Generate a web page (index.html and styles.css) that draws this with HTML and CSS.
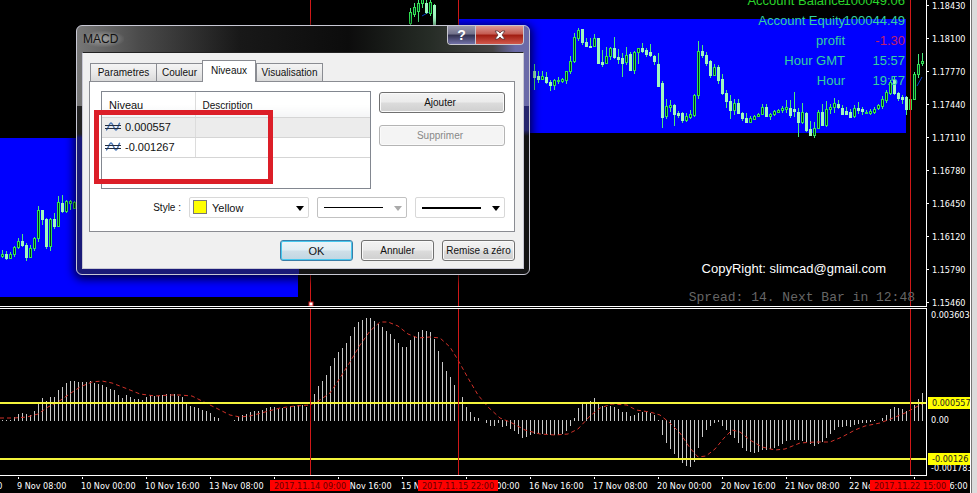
FILE: index.html
```html
<!DOCTYPE html>
<html lang="fr">

<head>
  <meta charset="UTF-8">
  <meta name="viewport" content="width=device-width, initial-scale=1.0">
  <title>MACD</title>
  <link rel="stylesheet" href="styles.css">
</head>

<body>
  <main class="terminal">
    <section class="plot price">
      <svg id="price_chart" class="chart"></svg>
      <dl class="account">
        <dt class="on-black">Account Balance</dt>
        <dd class="on-black">100049.06</dd>
        <dt>Account Equity</dt>
        <dd>100044.49</dd>
        <dt>profit</dt>
        <dd class="loss">-1.30</dd>
        <dt>Hour GMT</dt>
        <dd>15:57</dd>
        <dt>Hour</dt>
        <dd>19:57</dd>
      </dl>
      <p class="copyright">CopyRight: slimcad@gmail.com</p>
      <p class="spread">Spread: 14. Next Bar in 12:48</p>
    </section>
    <ul class="scale price-scale">
      <li>1.18430</li>
      <li>1.18100</li>
      <li>1.17770</li>
      <li>1.17440</li>
      <li>1.17110</li>
      <li>1.16780</li>
      <li>1.16450</li>
      <li>1.16120</li>
      <li>1.15790</li>
      <li>1.15460</li>
    </ul>

    <section class="plot macd">
      <svg id="macd_chart" class="chart"></svg>
    </section>
    <div class="scale macd-scale">
      <span>0.003603</span>
      <span>0.00</span>
      <span>-0.001783</span>
      <b class="level level-up">0.000557</b>
      <b class="level level-down">-0.00126</b>
    </div>

    <div class="times">
      <ol>
        <li>8 Nov 16:00</li>
        <li>9 Nov 08:00</li>
        <li>10 Nov 00:00</li>
        <li>10 Nov 16:00</li>
        <li>13 Nov 08:00</li>
        <li>14 Nov 00:00</li>
        <li>14 Nov 16:00</li>
        <li>15 Nov 08:00</li>
        <li>16 Nov 00:00</li>
        <li>16 Nov 16:00</li>
        <li>17 Nov 08:00</li>
        <li>20 Nov 00:00</li>
        <li>20 Nov 16:00</li>
        <li>21 Nov 08:00</li>
        <li>22 Nov 00:00</li>
        <li>22 Nov 16:00</li>
      </ol>
      <b class="stamp stamp-1">2017.11.14 09:00</b>
      <b class="stamp stamp-2">2017.11.15 22:00</b>
      <b class="stamp stamp-3">2017.11.22 15:00</b>
    </div>
  </main>
  <div class="edge"></div>

  <div class="dialog" role="dialog" aria-labelledby="dialog_title">
    <header class="titlebar">
      <h1 id="dialog_title">MACD</h1>
      <div class="win-btns">
        <button class="help" aria-label="Aide">?</button>
        <button class="close" aria-label="Fermer">
          <svg width="12" height="10" viewBox="0 0 12 10">
            <path d="M1 1h3l2 2 2-2h3L8 5l3 4H8L6 7 4 9H1l3-4z" fill="#fff" stroke="#5a3434" stroke-width=".8" />
          </svg>
        </button>
      </div>
    </header>
    <div class="client">
      <div class="tabs" role="tablist">
        <button role="tab" class="tab-1">Parametres</button>
        <button role="tab" class="tab-2">Couleur</button>
        <button role="tab" class="tab-3 active" aria-selected="true">Niveaux</button>
        <button role="tab" class="tab-4">Visualisation</button>
      </div>
      <div class="tab-page">
        <div class="levels">
          <div class="list">
            <table>
              <thead>
                <tr>
                  <th>Niveau</th>
                  <th>Description</th>
                </tr>
              </thead>
              <tbody>
                <tr class="selected">
                  <td>
                    <svg class="wave" width="16" height="12" viewBox="0 0 16 12">
                      <path d="M1 9C3 9 4 2 6 2s3 7 5 7 2-6 4-7" fill="none" stroke="#4a78b8" stroke-width="1.4" />
                      <path d="M0 4.5h16M0 7.5h16" stroke="#222c40" />
                    </svg>0.000557
                  </td>
                  <td></td>
                </tr>
                <tr>
                  <td>
                    <svg class="wave" width="16" height="12" viewBox="0 0 16 12">
                      <path d="M1 9C3 9 4 2 6 2s3 7 5 7 2-6 4-7" fill="none" stroke="#4a78b8" stroke-width="1.4" />
                      <path d="M0 4.5h16M0 7.5h16" stroke="#222c40" />
                    </svg>-0.001267
                  </td>
                  <td></td>
                </tr>
              </tbody>
            </table>
            <div class="marker"></div>
          </div>
          <div class="actions">
            <button class="btn">Ajouter</button>
            <button class="btn" disabled>Supprimer</button>
          </div>
        </div>
        <div class="style-row">
          <label for="color">Style :</label>
          <div class="combo combo-color">
            <select id="color">
              <option>Yellow</option>
            </select>
            <i class="swatch"></i>
            <svg class="arrow" width="8" height="5"><path d="M0 0h8L4 5z" /></svg>
          </div>
          <div class="combo combo-off">
            <select aria-label="Type de ligne" disabled>
              <option value="solid"></option>
            </select>
            <i class="line"></i>
            <svg class="arrow" width="8" height="5"><path d="M0 0h8L4 5z" /></svg>
          </div>
          <div class="combo">
            <select aria-label="Epaisseur">
              <option value="2"></option>
            </select>
            <i class="line thick"></i>
            <svg class="arrow" width="8" height="5"><path d="M0 0h8L4 5z" /></svg>
          </div>
        </div>
      </div>
      <footer class="footer">
        <button class="btn default">OK</button>
        <button class="btn">Annuler</button>
        <button class="btn">Remise a zéro</button>
      </footer>
    </div>
  </div>

  <script src="chart.js"></script>
</body>

</html>
```
FILE: styles.css
```css
* {
  margin: 0;
  padding: 0;
  box-sizing: border-box;
}

body {
  display: flex;
  min-height: 100vh;
  overflow: hidden;
  background: #000;
  color: #fff;
  font-family: "Liberation Sans", Arial, sans-serif;
  font-size: 11px;
}

ul,
ol {
  list-style: none;
}

.terminal {
  flex: 1;
  min-width: 0;
  display: grid;
  grid-template-columns: 1fr 44px;
  grid-template-rows: 307px 168px auto;
  row-gap: 1px;
  align-content: start;
  overflow: hidden;
}

.edge {
  width: 7px;
  background: #dcdcdc;
  border-left: 1px solid #fff;
  box-shadow: inset 1px 0 #777;
}

.plot {
  position: relative;
  overflow: hidden;
  border-bottom: 1px solid #fff;
}

.macd {
  border-top: 1px solid #fff;
}

.chart {
  display: block;
  width: 100%;
  height: 100%;
}

/* scales */
.scale,
.times {
  font-family: "DejaVu Sans Condensed", Tahoma, sans-serif;
  font-size: 9px;
  line-height: 14px;
}

.scale {
  position: relative;
  overflow: hidden;
  border-left: 1px solid #fff;
}

.price-scale li {
  display: flex;
  align-items: center;
  gap: 3px;
  height: 33px;
}

.price-scale li:first-child {
  margin-top: -11px;
}

.price-scale li::before {
  content: "";
  width: 2px;
  height: 1px;
  background: #fff;
}

.macd-scale {
  display: grid;
  grid-template-rows: 105px 48px auto;
  align-content: start;
  padding-left: 4px;
}

.level {
  position: absolute;
  left: 1px;
  width: 42px;
  height: 12px;
  padding-left: 4px;
  overflow: hidden;
  background: #ff0;
  color: #222;
  font-weight: normal;
  line-height: 12px;
}

.level-up {
  top: 89px;
}

.level-down {
  top: 145px;
}

.times {
  grid-column: 1 / -1;
  position: relative;
  overflow: hidden;
}

.times ol {
  display: flex;
  margin-left: -47px;
}

.times li {
  flex: 0 0 64px;
  white-space: nowrap;
}

.times li::before {
  content: "";
  display: block;
  width: 1px;
  height: 2px;
  margin-left: 1px;
  background: #fff;
}

.stamp {
  position: absolute;
  top: 3px;
  width: 80px;
  height: 11px;
  background: #f00;
  color: #600;
  font-weight: normal;
  line-height: 12px;
  text-align: center;
  white-space: nowrap;
}

.stamp-1 {
  left: 270px;
}

.stamp-2 {
  left: 418px;
}

.stamp-3 {
  left: 870px;
}

/* texts over the price chart */
.account {
  position: absolute;
  top: -9px;
  right: 21px;
  display: grid;
  grid-template-columns: auto 60px;
  font-size: 13px;
  line-height: 20px;
  text-align: right;
  color: #35d0a0;
}

.account dd {
  display: flex;
  justify-content: flex-end;
}

.account .on-black {
  color: #2ad42a;
}

.account .loss {
  color: #c0206c;
}

.copyright,
.spread {
  position: absolute;
  font-size: 13px;
  line-height: 16px;
}

.copyright {
  top: 261px;
  right: 40px;
}

.spread {
  top: 290px;
  right: 11px;
  color: #666;
  font-family: "Liberation Mono", "Courier New", monospace;
}

/* dialog */
.dialog {
  position: absolute;
  left: 76px;
  top: 25px;
  width: 454px;
  padding: 0 5px 5px;
  border: 1px solid #c8c8d4;
  border-radius: 6px;
  background:
    linear-gradient(90deg, transparent 92%, #6a6aa8 97%) 0 0 / 100% 80px no-repeat,
    linear-gradient(90deg, #777 0, #4a4a4a 14%, #181818 36%, #0c0c0c 60%, #262c26 78%, #444 92%) 0 0 / 100% 80px no-repeat,
    linear-gradient(#222 0 108px, #1a1a78 112px) 0 0 / 222px 100% no-repeat,
    linear-gradient(#26266e 0 104px, #141414 110px);
  box-shadow: 0 2px 10px 2px rgba(0, 0, 0, .75);
  color: #111;
}

.titlebar {
  display: flex;
  justify-content: space-between;
  height: 26px;
}

.titlebar h1 {
  padding: 0 6px 0 1px;
  align-self: center;
  font-size: 12px;
  font-weight: normal;
  line-height: 16px;
  background: radial-gradient(#a0a0a0, transparent 75%);
}

.win-btns {
  display: flex;
  height: 19px;
  border: 1px solid #c8c8d0;
  border-top: 0;
  border-radius: 0 0 4px 4px;
  overflow: hidden;
}

.win-btns button {
  display: flex;
  justify-content: center;
  align-items: center;
  border: 0;
  color: #fff;
  font: bold 14px "Liberation Sans", Arial, sans-serif;
}

.win-btns .help {
  width: 27px;
  background: linear-gradient(#9a9aae, #70708a 45%, #30304e 50%, #7272a8);
}

.win-btns .close {
  width: 48px;
  border-left: 1px solid #c8c8d0;
  background: linear-gradient(#dc9a94, #c45a50 45%, #a01c10 50%, #d0584c);
}

.client {
  padding: 7px 8px 7px 6px;
  border: 1px solid #c8c8d4;
  border-top-color: #222;
  background: #f0f0f0;
}

.tabs {
  display: flex;
  align-items: flex-end;
  height: 21px;
  padding-left: 1px;
}

.tabs button {
  height: 18px;
  border: 1px solid #8a8c92;
  border-bottom: 0;
  border-right: 0;
  background: linear-gradient(#f4f4f4, #eaeaea 50%, #dadada);
  color: #111;
  font: 10px "Liberation Sans", Arial, sans-serif;
}

.tabs .tab-1 {
  width: 66px;
}

.tabs .tab-2 {
  width: 46px;
}

.tabs .tab-3 {
  width: 54px;
}

.tabs .tab-4 {
  width: 67px;
  border-right: 1px solid #8a8c92;
}

.tabs button.active {
  position: relative;
  height: 22px;
  margin-bottom: -1px;
  padding-bottom: 3px;
  border-right: 1px solid #8a8c92;
  background: #fff;
}

.tab-page {
  padding: 9px 9px 13px 11px;
  border: 1px solid #8a8c92;
  background: #fff;
}

.levels {
  display: flex;
  gap: 8px;
}

.list {
  position: relative;
  flex: 1;
  height: 98px;
  border: 1px solid #828790;
}

.list table {
  width: 100%;
  border-collapse: collapse;
  table-layout: fixed;
}

.list th {
  height: 25px;
  padding: 2px 7px 0;
  border-bottom: 1px solid #d5d5d5;
  background: linear-gradient(#fff 50%, #f4f5f6);
  font-weight: normal;
  text-align: left;
}

.list th:first-child,
.list td:first-child {
  width: 93px;
  border-right: 1px solid #dcdcdc;
}

.list th + th {
  font-size: 10px;
}

.list td {
  height: 20px;
  padding-left: 3px;
  border-bottom: 1px solid #d5d5d5;
  white-space: nowrap;
}

.list .selected {
  background: #ececec;
}

.wave {
  margin-right: 4px;
  vertical-align: -2px;
}

/* hand drawn frame around the two levels */
.marker {
  position: absolute;
  left: -8px;
  top: 18px;
  width: 179px;
  height: 74px;
  border: 5px solid #dc1e28;
}

.actions {
  flex: 0 0 126px;
  display: flex;
  flex-direction: column;
  gap: 12px;
  padding-top: 1px;
}

.btn {
  height: 21px;
  border: 1px solid #707070;
  border-radius: 3px;
  background: linear-gradient(#f3f3f3, #ebebeb 48%, #dcdcdc 52%, #cfcfcf);
  box-shadow: inset 0 0 0 1px #fafafa;
  color: #111;
  font: 10px "Liberation Sans", Arial, sans-serif;
  white-space: nowrap;
}

.actions .btn {
  padding-right: 4px;
}

.btn:disabled {
  border-color: #b4b4b4;
  background: #f4f4f4;
  color: #888;
}

.style-row {
  display: flex;
  align-items: center;
  justify-content: flex-end;
  gap: 8px;
  margin-top: 8px;
  font-size: 10px;
}

.combo {
  position: relative;
  width: 90px;
  height: 21px;
}

.combo-color {
  width: 120px;
}

.combo select {
  width: 100%;
  height: 100%;
  appearance: none;
  border: 1px solid #d8d8d8;
  border-radius: 2px;
  background: #fff;
  color: #111;
  font: 11px "Liberation Sans", Arial, sans-serif;
}

.combo-color select {
  padding-left: 22px;
}

.combo-off select {
  border-color: #a8a8a8;
}

.swatch {
  position: absolute;
  left: 4px;
  top: 3px;
  width: 14px;
  height: 14px;
  border: 1px solid #777;
  background: #ff0;
}

.line {
  position: absolute;
  left: 7px;
  top: 10px;
  width: 59px;
  height: 1px;
  background: #000;
}

.thick {
  height: 2px;
}

.arrow {
  position: absolute;
  right: 5px;
  top: 9px;
}

.combo-off .arrow {
  fill: #aaa;
}

.footer {
  display: flex;
  justify-content: flex-end;
  gap: 8px;
  margin-top: 8px;
}

.footer .btn {
  width: 73px;
}

.footer .default {
  border-color: #3a7ea8;
  background: linear-gradient(#eef5f8, #e0eef4 48%, #cfdfe8 52%, #c0d6e2);
  box-shadow: inset 0 0 0 1px #48c8ee;
  font-size: 11px;
}
```
FILE: chart.js
```js
const STEP = 4;
const ZERO = 112;

// high, body top, body bottom, low, 1 = up
const leftCandles = [
  [250, 254, 256, 258, 1], [251, 254, 258, 260, 0], [252, 254, 258, 259, 1], [246, 247, 254, 257, 1],
  [238, 241, 247, 249, 1], [234, 241, 245, 247, 0], [243, 245, 257, 261, 0], [245, 248, 257, 258, 1],
  [237, 238, 248, 251, 1], [206, 210, 238, 242, 1], [210, 210, 219, 225, 0], [218, 219, 246, 249, 0],
  [218, 219, 246, 251, 1], [213, 219, 226, 229, 0], [196, 202, 226, 226, 1], [195, 203, 211, 213, 0],
  [200, 201, 211, 213, 1], [200, 201, 203, 210, 1], [201, 202, 208, 209, 1],
];

const topCandles = [
  [8, 12, 23, 26, 1], [3, 7, 14, 17, 1], [0, 3, 11, 22, 1], [-3, -1, 3, 8, 1],
  [0, 3, 12, 14, 0], [-2, 2, 13, 16, 1], [4, 5, 30, 32, 0],
];

const rightCandles = [
  [64, 71, 77, 90, 0], [71, 76, 79, 83, 0], [71, 76, 79, 80, 1], [72, 77, 82, 84, 0],
  [80, 82, 85, 91, 0], [79, 80, 85, 90, 1], [77, 80, 81, 84, 1], [78, 79, 81, 83, 1],
  [71, 71, 80, 84, 1], [56, 61, 71, 74, 1], [33, 37, 61, 63, 1], [28, 30, 38, 41, 1],
  [29, 29, 42, 45, 0], [38, 42, 46, 47, 0], [38, 46, 47, 48, 0], [34, 38, 46, 47, 1],
  [38, 38, 63, 64, 0], [50, 62, 64, 67, 0], [47, 56, 63, 64, 1], [47, 48, 56, 60, 1],
  [37, 48, 57, 59, 0], [49, 57, 59, 64, 0], [53, 58, 63, 77, 0], [47, 55, 62, 65, 1],
  [52, 54, 70, 71, 0], [51, 52, 70, 74, 1], [48, 48, 52, 64, 1], [43, 48, 51, 53, 0],
  [48, 50, 54, 57, 0], [44, 52, 55, 57, 0], [55, 56, 61, 65, 0], [53, 64, 86, 87, 0],
  [81, 83, 117, 128, 0], [99, 106, 116, 119, 1], [100, 105, 107, 112, 1], [104, 105, 114, 126, 0],
  [111, 113, 115, 118, 0], [112, 113, 120, 123, 0], [113, 116, 120, 122, 1], [110, 114, 117, 119, 1],
  [94, 95, 115, 117, 1], [41, 51, 95, 99, 1], [45, 51, 55, 58, 0], [52, 55, 63, 66, 0],
  [60, 61, 75, 78, 0], [64, 67, 75, 76, 1], [65, 67, 80, 84, 0], [74, 79, 93, 95, 0],
  [90, 93, 101, 108, 0], [95, 101, 110, 119, 0], [99, 103, 110, 115, 1], [99, 103, 113, 114, 0],
  [112, 113, 118, 121, 0], [113, 118, 122, 123, 0], [116, 118, 122, 123, 1], [115, 116, 119, 120, 1],
  [113, 114, 116, 117, 1], [104, 107, 114, 115, 1], [104, 107, 116, 117, 0], [113, 114, 116, 120, 1],
  [110, 111, 114, 116, 1], [109, 110, 112, 113, 1], [106, 108, 110, 113, 1], [100, 107, 109, 113, 1],
  [100, 108, 115, 118, 0], [92, 109, 111, 117, 0], [108, 112, 122, 137, 0], [103, 112, 122, 124, 1],
  [112, 113, 130, 132, 0], [121, 129, 135, 135, 0], [122, 128, 135, 138, 1], [110, 112, 128, 129, 1],
  [104, 112, 125, 126, 0], [101, 109, 125, 127, 1], [104, 107, 109, 114, 1], [98, 103, 107, 113, 1],
  [100, 104, 107, 109, 0], [105, 108, 114, 115, 0], [107, 111, 114, 115, 0], [109, 112, 117, 118, 0],
  [105, 108, 116, 118, 1], [102, 108, 110, 114, 0], [107, 109, 111, 115, 0], [110, 112, 113, 114, 1],
  [109, 111, 113, 115, 1], [107, 109, 112, 114, 1], [104, 105, 108, 110, 1], [96, 99, 106, 109, 1],
  [90, 92, 100, 103, 1], [80, 82, 93, 95, 1], [77, 80, 93, 95, 0], [92, 93, 98, 101, 0],
  [95, 97, 99, 104, 0], [96, 97, 109, 115, 0], [96, 99, 109, 111, 1], [72, 74, 99, 100, 1],
  [54, 64, 74, 78, 1], [53, 61, 63, 66, 1],
];

const histogram = [
  1, 1, 1, 4, 7, 8, 7, 6, 10, 17, 23, 20, 24, 24, 31, 34, 38, 40, 40, 39, 39, 39, 40, 38, 37, 36,
  34, 32, 31, 26, 23, 26, 24, 22, 22, 21, 24, 26, 25, 25, 26, 27, 27, 27, 25, 24, 18, 15, 14, 13, 11, 10,
  8, 4, 3, 0, 0, 0, 1, 4, 6, 7, 9, 10, 10, 11, 13, 14, 14, 12, 13, 13, 15, 15, 16, 16, 14,
  20, 27, 35, 40, 46, 55, 63, 69, 73, 78, 85, 94, 99, 101, 103, 103, 100, 97, 94, 90, 87, 82, 78, 74, 74,
  81, 85, 89, 91, 90, 89, 82, 70, 59, 50, 44, 36, 30, 24, 14, 9, 4, 3, 0, -3, -6, -6, -3, -7, -6, -9,
  -11, -14, -18, -17, -15, -14, -14, -14, -14, -15, -15, -15, -14, -11, -6, 3, 13, 17, 18, 20, 23, 18,
  15, 14, 15, 14, 12, 9, 9, 5, 6, 8, 9, 9, 8, 6, -1, -15, -23, -29, -34, -38, -43, -46, -47, -42, -28,
  -17, -10, -6, -3, -2, -6, -10, -15, -18, -23, -28, -31, -32, -33, -32, -30, -30, -29, -28, -26, -24,
  -21, -20, -20, -20, -21, -22, -24, -26, -24, -22, -18, -14, -10, -7, -7, -6, -7, -5, -4, -3, -3, -2,
  -1, 0, 3, 6, 12, 14, 13, 12, 10, 7, 16, 22, 28,
];

// signal line, y above (+) or under (-) zero
const signal = [
  [0, 2], [14, 2], [27, 3], [38, 6], [48, 13], [58, 18], [68, 25], [80, 33], [92, 38], [102, 39],
  [112, 37], [125, 32], [140, 26], [155, 24], [170, 25], [180, 25], [192, 24], [202, 19], [210, 15],
  [220, 10], [230, 5], [240, 3], [250, 4], [265, 8], [280, 12], [295, 14], [310, 15], [320, 20],
  [330, 27], [340, 42], [350, 58], [360, 75], [370, 89], [380, 98], [388, 98], [398, 94], [408, 86],
  [418, 82], [430, 83], [440, 82], [450, 73], [458, 60], [468, 42], [478, 25], [488, 13], [500, 2],
  [510, -2], [525, -10], [540, -14], [555, -15], [568, -14], [578, -9], [590, 4], [600, 12], [612, 16],
  [627, 15], [636, 10], [650, 8], [660, 5], [670, -3], [680, -13], [690, -28], [698, -37], [706, -36],
  [715, -29], [724, -18], [732, -10], [740, -12], [750, -20], [762, -27], [775, -30], [785, -29],
  [800, -23], [815, -22], [830, -22], [842, -17], [855, -10], [865, -6], [880, -3], [893, 2],
  [905, 7], [918, 14], [922, 16],
];

const rect = (x, y, w, h, fill, extra = '') =>
  `<rect x="${x}" y="${y}" width="${w}" height="${h}" fill="${fill}" ${extra}/>`;

const drawCandles = (list, startX) => list.map(([high, top, bottom, low, up], i) => {
  const x = startX + i * STEP;
  const height = Math.max(bottom - top, 1);
  const wick = rect(x, high, 1, low - high, '#4be87c');
  const body = up
    ? rect(x - 0.5, top + 0.5, 2, height, '#003020', 'stroke="#30e050"')
    : rect(x - 1, top, 3, height + 1, '#a0f8c0');
  return wick + body;
}).join('');

const verticals = [310, 458, 910].map(x => rect(x, 0, 1, '100%', '#d01818')).join('');

price_chart.innerHTML =
  rect(0, 138, 298, 159, '#00f') +
  rect(458, 19, 448, 114, '#00f') +
  '<path d="M917 86l5-9M422 16l9-5" stroke="#0a3cc8"/>' +
  drawCandles(leftCandles, 2) +
  drawCandles(topCandles, 410) +
  drawCandles(rightCandles, 534) +
  verticals +
  rect(309, 302, 4, 4, '#fff', 'stroke="#d01818"');

const bars = histogram.map((v, i) =>
  rect(2 + i * STEP, v > 0 ? ZERO - v : ZERO - 1, 1, Math.abs(v), '#c8c8c8')
).join('');

const points = signal.map(([x, v]) => `${x},${ZERO - 1 - v}`).join(' ');

macd_chart.innerHTML =
  bars +
  `<polyline points="${points}" fill="none" stroke="#d03028" stroke-dasharray="4 3"/>` +
  rect(0, 93, '100%', 2, '#f4f43c') +
  rect(0, 149, '100%', 2, '#f4f43c') +
  verticals;
```
